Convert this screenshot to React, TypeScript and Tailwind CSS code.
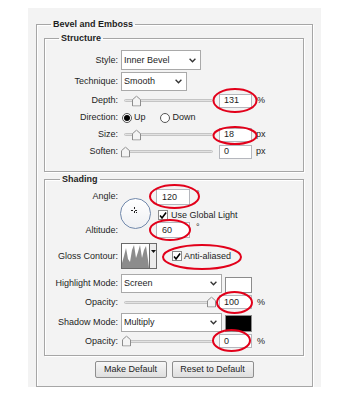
import type { ReactNode } from 'react'

const Label = ({ children }: { children: ReactNode }) => (
  <div className="w-[73px] shrink-0 text-right">{children}</div>
)

const Chevron = () => (
  <svg width="7" height="5" viewBox="0 0 7 5">
    <polyline points="0.6,0.8 3.5,3.8 6.4,0.8" fill="none" stroke="#333" strokeWidth="1.3" />
  </svg>
)

const Select = ({ value, width, height }: { value: string; width: string; height: string }) => (
  <div className={`flex items-center justify-between border border-[#a9a9a9] bg-white pl-[2px] pr-[4px] ${width} ${height}`}>
    <span>{value}</span>
    <Chevron />
  </div>
)

const Field = ({ value, className = '' }: { value: string; className?: string }) => (
  <div className={`flex h-[14px] w-[33px] items-center border border-[#b5b7bd] bg-white pl-[4px] ${className}`}>
    {value}
  </div>
)

// thumb position in px from the left of the slider
const Slider = ({ pos }: { pos: number }) => (
  <div className="relative flex h-full w-[95px] items-center px-[3px]">
    <div className="h-[3px] w-full rounded-full border border-[#c4c4c4] bg-[#e2e2e2]" />
    <svg className="absolute top-1/2 -translate-y-1/2" style={{ left: pos }} width="9" height="11" viewBox="0 0 9 11">
      <path d="M0.5 10.5V4.2L4.5 0.6L8.5 4.2V10.5Z" fill="#f4f4f4" stroke="#8c8c8c" />
    </svg>
  </div>
)

const Radio = ({ on }: { on?: boolean }) => (
  <div className="flex h-[10px] w-[10px] items-center justify-center rounded-full border border-[#555] bg-white">
    {on && <div className="h-[6px] w-[6px] rounded-full bg-black" />}
  </div>
)

const Check = () => (
  <div className="flex h-[10px] w-[10px] items-center justify-center border border-[#8a8a8a] bg-white">
    <svg width="9" height="9" viewBox="0 0 9 9">
      <polyline points="1.2,4.6 3.4,7.2 8,1.2" fill="none" stroke="#000" strokeWidth="1.8" />
    </svg>
  </div>
)

const Row = ({ label, children }: { label: string; children: ReactNode }) => (
  <div className="flex h-[17px] items-center">
    <Label>{label}</Label>
    <div className="ml-[3px] flex h-full items-center">{children}</div>
  </div>
)

const groupLine = 'border border-[#a6a6a6] shadow-[inset_1px_1px_0_#fff,1px_1px_0_#fff]'

export default function App() {
  return (
    <div className="relative h-[399px] w-[347px] bg-white pl-[28px] pt-[8px] font-['Liberation_Sans',Arial,sans-serif] text-[9px] leading-none text-[#1e1e1e]">
      <div className="h-[379px] w-[293px] bg-[#f3f3f3] px-[8px] pt-[10px]">
        <fieldset className={`${groupLine} pb-[8px] pl-[7px] pr-[8px] pt-[2px]`}>
          <legend className="ml-[7px] px-[2px] font-bold leading-[12px]">Bevel and Emboss</legend>

          {/* Structure */}
          <fieldset className={`${groupLine} pb-[11px] pt-[6px]`}>
            <legend className="ml-[14px] px-[2px] font-bold leading-[12px]">Structure</legend>
            <div className="flex h-[22px] items-start">
              <Label><div className="pt-[6px]">Style:</div></Label>
              <div className="ml-[3px]">
                <Select value="Inner Bevel" width="w-[80px]" height="h-[20px]" />
              </div>
            </div>
            <div className="flex h-[20px] items-start">
              <Label><div className="pt-[5px]">Technique:</div></Label>
              <div className="ml-[3px]">
                <Select value="Smooth" width="w-[66px]" height="h-[19px]" />
              </div>
            </div>
            <Row label="Depth:">
              <Slider pos={11} />
              <Field value="131" className="ml-[3px]" />
              <span className="ml-[5px]">%</span>
            </Row>
            <Row label="Direction:">
              <div className="ml-[1px] flex items-center gap-[2px]">
                <Radio on />
                <span>Up</span>
              </div>
              <div className="ml-[14px] flex items-center gap-[3px]">
                <Radio />
                <span>Down</span>
              </div>
            </Row>
            <Row label="Size:">
              <Slider pos={11} />
              <Field value="18" className="ml-[3px]" />
              <span className="ml-[4px]">px</span>
            </Row>
            <Row label="Soften:">
              <Slider pos={0} />
              <Field value="0" className="ml-[3px]" />
              <span className="ml-[4px]">px</span>
            </Row>
          </fieldset>

          {/* Shading */}
          <fieldset className={`${groupLine} mt-[1px] pb-[5px] pt-[3px]`}>
            <legend className="ml-[15px] px-[2px] font-bold leading-[12px]">Shading</legend>
            <div className="flex h-[51px]">
              <div className="flex w-[73px] shrink-0 flex-col justify-between text-right">
                <div className="flex h-[17px] items-center justify-end">Angle:</div>
                <div className="flex h-[17px] items-center justify-end">Altitude:</div>
              </div>
              <div className="ml-[2px] flex h-[31px] w-[31px] items-center justify-center self-center rounded-full border border-[#7088ab] bg-gradient-to-b from-white to-[#eef0f3]">
                <svg width="29" height="29" viewBox="0 0 29 29">
                  <g fill="#222">
                    <rect x="13" y="8" width="1" height="2" />
                    <rect x="13" y="12" width="1" height="2" />
                    <rect x="10" y="11" width="2" height="1" />
                    <rect x="14" y="11" width="2" height="1" />
                    <rect x="15" y="13" width="1" height="1" />
                  </g>
                </svg>
              </div>
              <div className="ml-[5px] flex flex-col">
                <div className="mt-[1px] flex items-start">
                  <div className="flex h-[16px] w-[34px] items-center border border-[#b5b7bd] bg-white pl-[5px]">120</div>
                  <span className="ml-[6px] mt-[1px]">°</span>
                </div>
                <div className="flex h-[17px] items-center pl-[2px] pt-[3px]">
                  <Check />
                  <span className="ml-[3px]">Use Global Light</span>
                </div>
                <div className="flex items-start">
                  <div className="flex h-[16px] w-[34px] items-center border border-[#b5b7bd] bg-white pl-[5px]">60</div>
                  <span className="ml-[6px] mt-[1px]">°</span>
                </div>
              </div>
            </div>

            <div className="mt-[4px] flex h-[26px] items-center">
              <Label>Gloss Contour:</Label>
              <div className="ml-[3px] flex h-[26px] border border-[#6a6a6a] bg-white">
                <svg width="27" height="24" viewBox="0 0 27 24">
                  <polygon
                    points="0,24 0,19 2,12 4,4 6,15 8,18 10,6 12,1 14,14 16,8 18,1 20,14 22,6 24,2 26,16 27,24"
                    fill="#8c8c8c"
                  />
                </svg>
                <div className="flex w-[7px] justify-center border-l border-[#6a6a6a] bg-[#ececec] pt-[6px]">
                  <svg width="5" height="3" viewBox="0 0 5 3">
                    <polygon points="0,0 5,0 2.5,3" fill="#111" />
                  </svg>
                </div>
              </div>
              <div className="ml-[15px] flex items-center">
                <Check />
                <span className="ml-[2px]">Anti-aliased</span>
              </div>
            </div>

            <div className="mt-[5px] flex h-[19px] items-center">
              <Label>Highlight Mode:</Label>
              <div className="ml-[3px] flex items-end gap-[3px]">
                <Select value="Screen" width="w-[101px]" height="h-[19px]" />
                <div className="h-[16px] w-[27px] border border-[#8c8c8c] bg-white" />
              </div>
            </div>
            <div className="flex h-[18px] items-center">
              <Label>Opacity:</Label>
              <div className="ml-[3px] flex h-full items-center">
                <Slider pos={86} />
                <Field value="100" className="ml-[3px]" />
                <span className="ml-[5px]">%</span>
              </div>
            </div>
            <div className="mt-[2px] flex h-[19px] items-center">
              <Label>Shadow Mode:</Label>
              <div className="ml-[3px] flex items-end gap-[3px]">
                <Select value="Multiply" width="w-[101px]" height="h-[19px]" />
                <div className="h-[17px] w-[27px] border border-[#8c8c8c] bg-black" />
              </div>
            </div>
            <div className="flex h-[18px] items-center">
              <Label>Opacity:</Label>
              <div className="ml-[3px] flex h-full items-center">
                <Slider pos={1} />
                <Field value="0" className="ml-[3px]" />
                <span className="ml-[5px]">%</span>
              </div>
            </div>
          </fieldset>

          <div className="mt-[5px] flex justify-center gap-[5px]">
            <button className="h-[17px] w-[72px] rounded-[2px] border border-[#8e8e8e] bg-gradient-to-b from-[#f7f7f7] to-[#dedede]">
              Make Default
            </button>
            <button className="h-[17px] w-[82px] rounded-[2px] border border-[#8e8e8e] bg-gradient-to-b from-[#f7f7f7] to-[#dedede]">
              Reset to Default
            </button>
          </div>
        </fieldset>
      </div>

      {/* red marks drawn over the dialog */}
      <svg className="pointer-events-none absolute left-0 top-0" width="347" height="399" viewBox="0 0 347 399">
        <g fill="none" stroke="#e2001a" strokeWidth="2">
          <ellipse cx="235" cy="100.5" rx="21.5" ry="11.5" />
          <ellipse cx="235" cy="135.5" rx="21.5" ry="8.5" />
          <ellipse cx="174.5" cy="196.5" rx="24.5" ry="11.5" />
          <ellipse cx="170" cy="230" rx="20" ry="10" />
          <ellipse cx="202" cy="257" rx="39" ry="12" />
          <ellipse cx="234.5" cy="302.5" rx="17.5" ry="10.5" />
          <ellipse cx="231.5" cy="340.5" rx="18.5" ry="10.5" />
        </g>
      </svg>
    </div>
  )
}
